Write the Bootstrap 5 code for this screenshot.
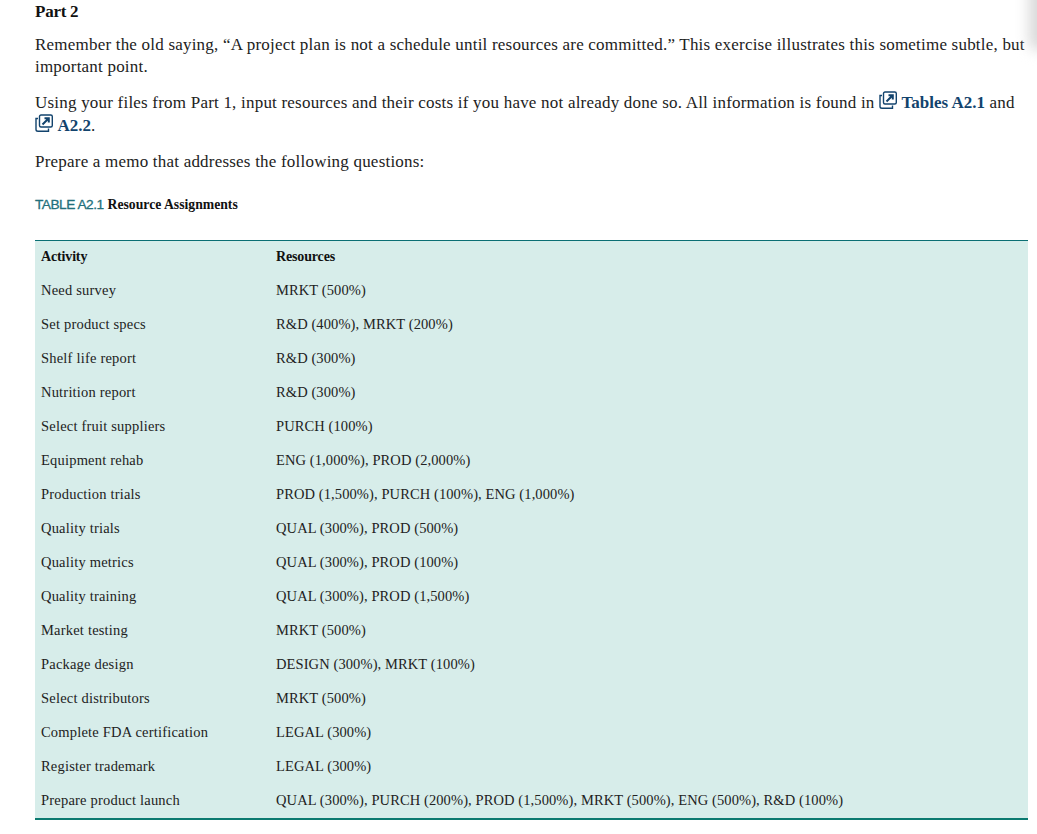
<!DOCTYPE html>
<html lang="en"><head><meta charset="utf-8"><title>Part 2</title>
<link href="https://cdn.jsdelivr.net/npm/bootstrap@5.3.0/dist/css/bootstrap.min.css" rel="stylesheet">
<style>
html,body{height:834px;overflow:hidden}
body{font-family:"Liberation Serif","Times New Roman",serif;color:#222;background:#fff;position:relative}
.sheet{padding:0 9px 0 35px}
.part-title{font-size:17px;font-weight:700;line-height:24px;letter-spacing:-.25px;margin:0 0 10px;color:#111;font-family:inherit}
.para{font-size:17px;line-height:22px;letter-spacing:.21px;margin:0 0 14px}
.para-first{margin-bottom:13px}
.para-links{line-height:23px}
.para a{color:#12436d;font-weight:700;text-decoration:none;letter-spacing:0}
.ext-ic{width:18px;height:18px;vertical-align:3px;margin:-8px 4.500px -4px 0}
.cap{font-size:13.7px;line-height:20px;margin:22px 0 25px;font-weight:700;color:#111}
.cap-label{font-family:"Liberation Sans",Arial,sans-serif;font-weight:400;color:#22707c;letter-spacing:-.5px;margin-right:4px;-webkit-text-stroke:.3px #22707c}
.res-table{--bs-table-bg:#d7edea;border-collapse:separate;border-spacing:0;width:993px;margin:0;border-top:1px solid #0b6f74;border-bottom:2px solid #0b7a70;font-size:14.5px;letter-spacing:.2px;color:#222;table-layout:fixed}
.res-table th,.res-table td{border:0;padding:0 6px;height:34px;vertical-align:middle;line-height:20px}
.res-table th{letter-spacing:-.15px;font-weight:700;color:#111;font-size:14px;height:32px;padding-top:0}
.res-table tbody tr:last-child td{height:35px;padding-bottom:1px}
.res-table .c1{width:235px}
.res-table td+td{letter-spacing:.1px}
.corner-glow{position:absolute;top:-20px;right:-24px;width:32px;height:70px;background:#d9d9d9;border-radius:8px;filter:blur(7px)}
</style></head>
<body>
<div class="sheet">
<h2 class="part-title">Part 2</h2>
<p class="para para-first">Remember the old saying, “A project plan is not a schedule until resources are committed.” This exercise illustrates this sometime subtle, but important point.</p>
<p class="para para-links">Using your files from Part 1, input resources and their costs if you have not already done so. All information is found in <a href="#"><svg class="ext-ic" viewBox="0 0 18 18" fill="none" stroke="#12436d" stroke-width="1.4"><path d="M3 4.500H1V15.500Q1 17.300 3 17.300H13.500V14.500"/><rect x="4.500" y="1" width="12.800" height="12" rx="1.500"/><path d="M7.500 10.500L13 5M9.500 4.300H13.800V8.500" stroke-width="2"/></svg>Tables A2.1</a> and <a href="#"><svg class="ext-ic" viewBox="0 0 18 18" fill="none" stroke="#12436d" stroke-width="1.4"><path d="M3 4.500H1V15.500Q1 17.300 3 17.300H13.500V14.500"/><rect x="4.500" y="1" width="12.800" height="12" rx="1.500"/><path d="M7.500 10.500L13 5M9.500 4.300H13.800V8.500" stroke-width="2"/></svg>A2.2</a>.</p>
<p class="para">Prepare a memo that addresses the following questions:</p>
<p class="cap"><span class="cap-label">TABLE A2.1</span>Resource Assignments</p>
<table class="table res-table">
<thead><tr><th class="c1">Activity</th><th>Resources</th></tr></thead>
<tbody>
<tr><td>Need survey</td><td>MRKT (500%)</td></tr>
<tr><td>Set product specs</td><td>R&amp;D (400%), MRKT (200%)</td></tr>
<tr><td>Shelf life report</td><td>R&amp;D (300%)</td></tr>
<tr><td>Nutrition report</td><td>R&amp;D (300%)</td></tr>
<tr><td>Select fruit suppliers</td><td>PURCH (100%)</td></tr>
<tr><td>Equipment rehab</td><td>ENG (1,000%), PROD (2,000%)</td></tr>
<tr><td>Production trials</td><td>PROD (1,500%), PURCH (100%), ENG (1,000%)</td></tr>
<tr><td>Quality trials</td><td>QUAL (300%), PROD (500%)</td></tr>
<tr><td>Quality metrics</td><td>QUAL (300%), PROD (100%)</td></tr>
<tr><td>Quality training</td><td>QUAL (300%), PROD (1,500%)</td></tr>
<tr><td>Market testing</td><td>MRKT (500%)</td></tr>
<tr><td>Package design</td><td>DESIGN (300%), MRKT (100%)</td></tr>
<tr><td>Select distributors</td><td>MRKT (500%)</td></tr>
<tr><td>Complete FDA certification</td><td>LEGAL (300%)</td></tr>
<tr><td>Register trademark</td><td>LEGAL (300%)</td></tr>
<tr><td>Prepare product launch</td><td>QUAL (300%), PURCH (200%), PROD (1,500%), MRKT (500%), ENG (500%), R&amp;D (100%)</td></tr>
</tbody></table>
</div>
<div class="corner-glow"></div>
<script src="https://cdn.jsdelivr.net/npm/bootstrap@5.3.0/dist/js/bootstrap.bundle.min.js"></script>
</body></html>
